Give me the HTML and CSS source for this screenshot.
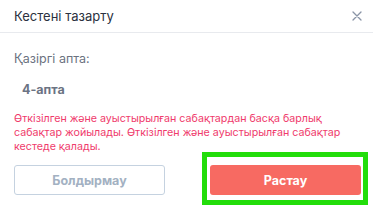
FILE: index.html
```html
<!DOCTYPE html>
<html>
<head>
<title>Кестені тазарту</title>
<link rel="stylesheet" href="styles.css">
</head>
<body>

<div class="modal">

<div class="modalHeader">
<span class="modalTitle">Кестені тазарту</span>
<span class="closeBtn">
<svg width="10" height="10" viewBox="0 0 10 10"><path d="M1 1L9 9M9 1L1 9" stroke="#8a94a6" stroke-width="1.3" stroke-linecap="round"/></svg>
</span>
</div>

<div class="modalBody">
<div class="weekLabel">Қазіргі апта:</div>
<div class="weekValue">4-апта</div>
<div class="warning">Өткізілген және ауыстырылған сабақтардан басқа барлық сабақтар жойылады. Өткізілген және ауыстырылған сабақтар кестеде қалады.</div>

<div class="buttons">
<button class="cancelBtn">Болдырмау</button>
<button class="confirmBtn">Растау</button>
</div>
</div>

<div class="highlight"></div>

</div>

</body>
</html>
```

FILE: styles.css
```css
body{
margin:0;
background-color:white;
font-family:Inter, "Noto Sans", sans-serif;
}

.modal{
position:relative;
width:373px;
height:210px;
background-color:white;
}

.modalHeader{
height:33px;
border-bottom:1px solid #e8eaee;
display:flex;
align-items:center;
justify-content:space-between;
padding:0 11px 0 14px;
box-sizing:border-box;
}

.modalTitle{
font-size:13px;
color:#2b3140;
}

.closeBtn{
display:flex;
}

.modalBody{
padding:18px 12px 0 14px;
}

.weekLabel{
font-size:12.5px;
color:#6b7280;
}

.weekValue{
font-size:12.5px;
font-weight:700;
color:#6b7383;
padding:16px 0 0 8px;
}

.warning{
font-size:10.7px;
line-height:14px;
color:#ef3b6c;
margin-top:15px;
}

.buttons{
display:flex;
justify-content:space-between;
margin-top:11px;
}

.buttons button{
width:151px;
height:30px;
border-radius:3px;
font-family:Inter, "Noto Sans", sans-serif;
font-size:12.5px;
font-weight:700;
cursor:pointer;
}

.cancelBtn{
background-color:white;
border:1px solid #c5d2e0;
color:#a3b1c2;
}

.confirmBtn{
background-color:#f76a62;
border:none;
color:white;
width:152px;
}

.highlight{
position:absolute;
left:202px;
top:152px;
width:156px;
height:43px;
border:5px solid #22dd0a;
}
```
